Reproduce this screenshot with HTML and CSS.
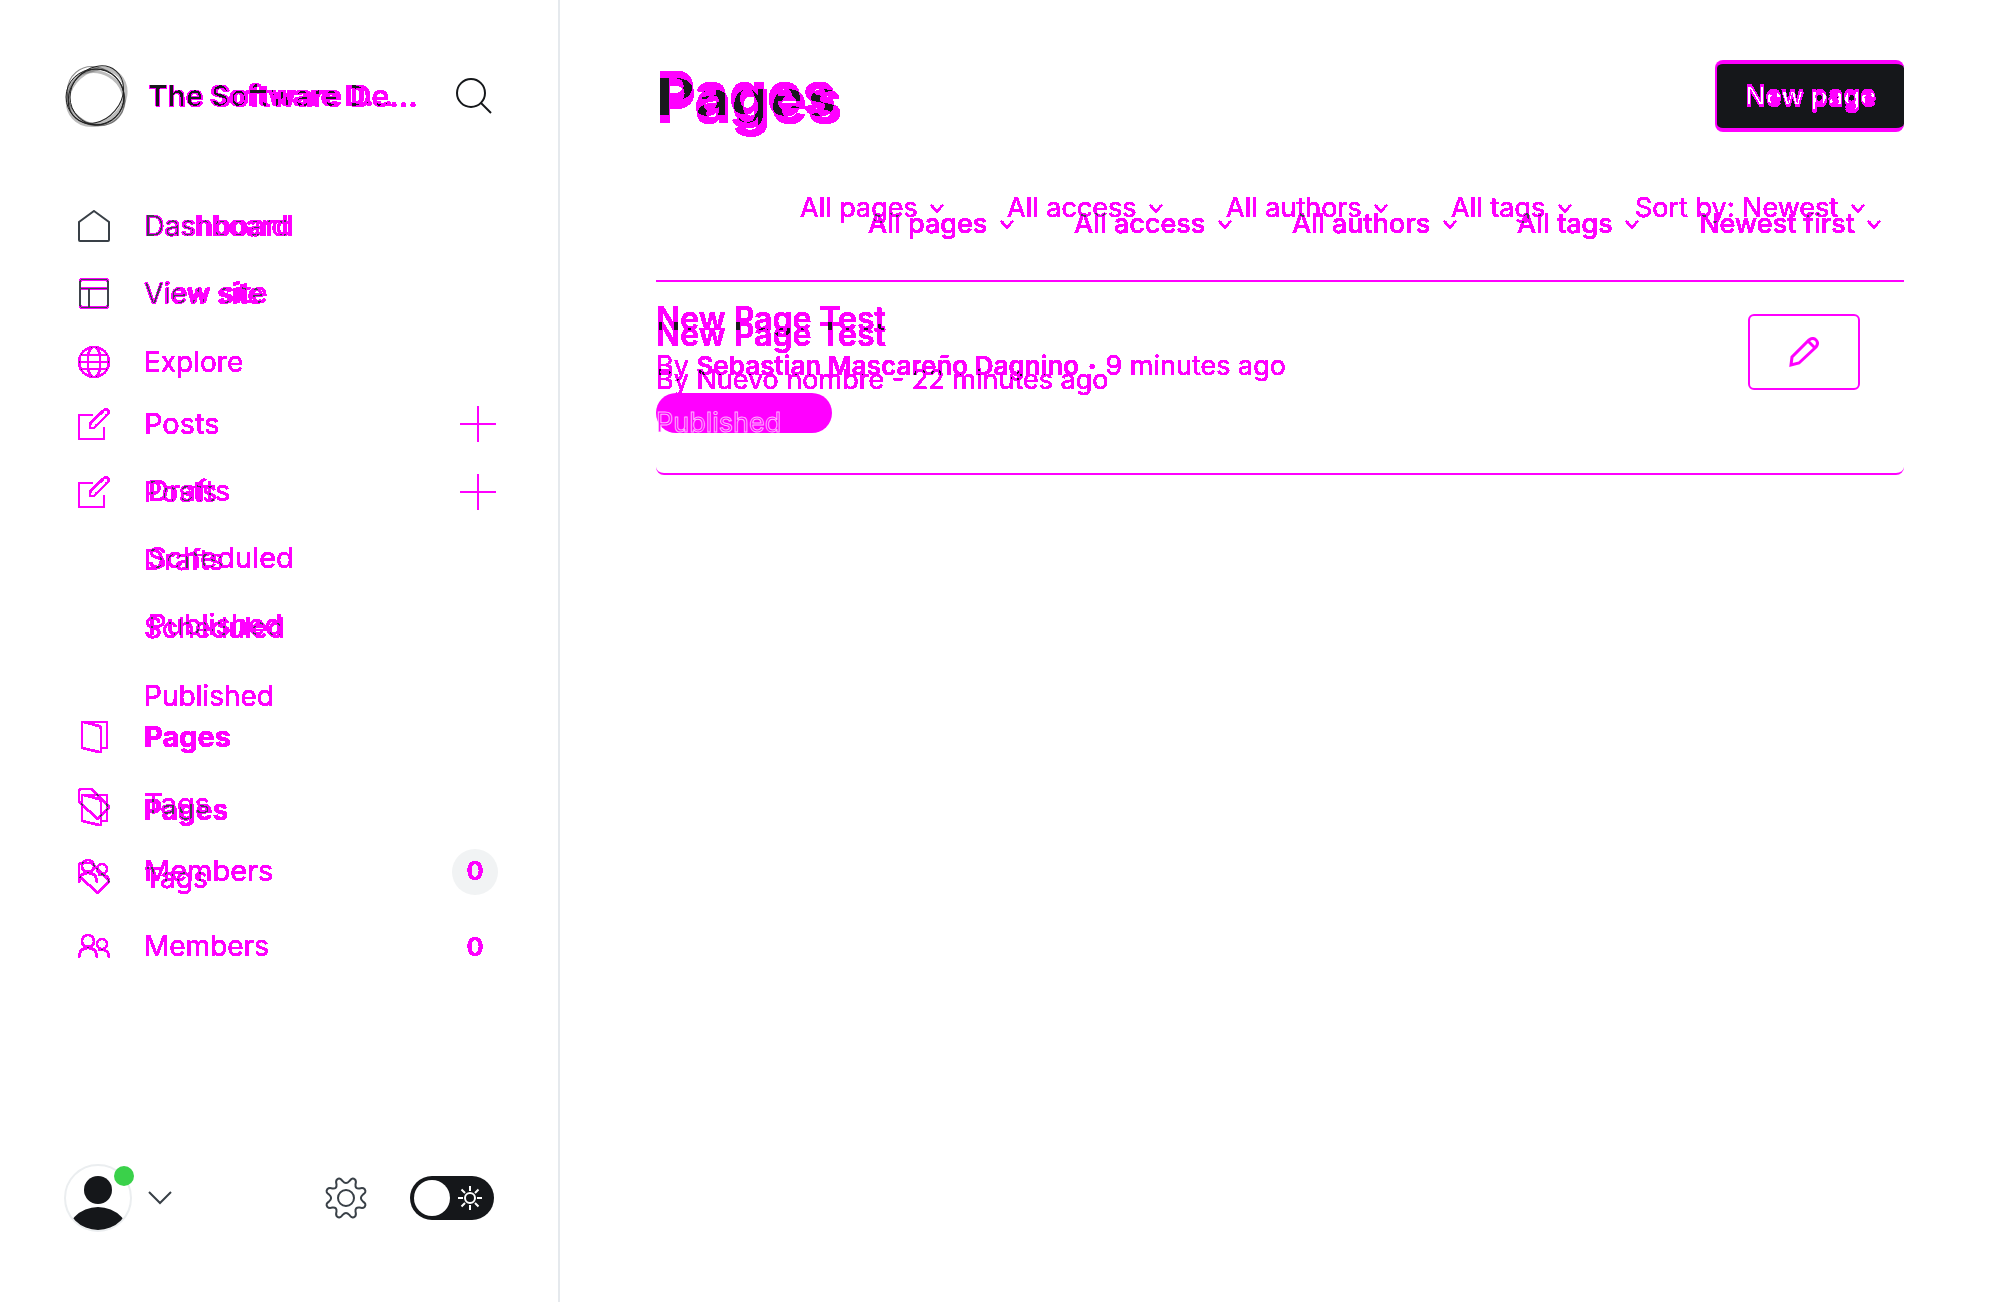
FILE: index.html
```
<!DOCTYPE html>
<html lang="en">
<head>
<meta charset="utf-8">
<meta name="viewport" content="width=device-width, initial-scale=1">
<title>Pages</title>
<link rel="stylesheet" href="styles.css">
</head>
<body>
<svg class="defs" aria-hidden="true">
  <!-- Two half-transparent layers: a single layer turns magenta, a full overlap turns to ink. -->
  <filter id="diff-ink" x="0" y="0" width="100%" height="100%" color-interpolation-filters="sRGB">
    <feColorMatrix values="0 0 0 1 0  0 0 0 1 0  0 0 0 1 0  0 0 0 1 0"/>
    <feComponentTransfer>
      <feFuncR type="discrete" tableValues="1 1 1 1 1 1 1 1 1 1 1 1 1 1 .1 .1 .1 .1 .1 .1"/>
      <feFuncG type="discrete" tableValues="0 0 0 0 0 0 0 0 0 0 0 0 0 0 .1 .1 .1 .1 .1 .1"/>
      <feFuncB type="discrete" tableValues="1 1 1 1 1 1 1 1 1 1 1 1 1 1 .11 .11 .11 .11 .11 .11"/>
      <feFuncA type="discrete" tableValues="0 1 1 1 1 1 1 1 1 1 1 1 1 1 1 1 1 1 1 1"/>
    </feComponentTransfer>
  </filter>
  <filter id="diff-slate" x="0" y="0" width="100%" height="100%" color-interpolation-filters="sRGB">
    <feColorMatrix values="0 0 0 1 0  0 0 0 1 0  0 0 0 1 0  0 0 0 1 0"/>
    <feComponentTransfer>
      <feFuncR type="discrete" tableValues="1 1 1 1 1 1 1 1 1 1 1 1 1 1 .25 .25 .25 .25 .25 .25"/>
      <feFuncG type="discrete" tableValues="0 0 0 0 0 0 0 0 0 0 0 0 0 0 .27 .27 .27 .27 .27 .27"/>
      <feFuncB type="discrete" tableValues="1 1 1 1 1 1 1 1 1 1 1 1 1 1 .3 .3 .3 .3 .3 .3"/>
      <feFuncA type="discrete" tableValues="0 1 1 1 1 1 1 1 1 1 1 1 1 1 1 1 1 1 1 1"/>
    </feComponentTransfer>
  </filter>
  <filter id="diff-white" x="0" y="0" width="100%" height="100%" color-interpolation-filters="sRGB">
    <feColorMatrix values="0 0 0 1 0  0 0 0 1 0  0 0 0 1 0  0 0 0 1 0"/>
    <feComponentTransfer>
      <feFuncR type="discrete" tableValues="1"/>
      <feFuncG type="discrete" tableValues="0 0 0 0 0 0 0 0 0 0 0 0 0 0 1 1 1 1 1 1"/>
      <feFuncB type="discrete" tableValues="1"/>
      <feFuncA type="discrete" tableValues="0 1 1 1 1 1 1 1 1 1 1 1 1 1 1 1 1 1 1 1"/>
    </feComponentTransfer>
  </filter>
  <symbol id="i-site" viewBox="0 0 32 32"><rect x="2" y="2" width="28" height="28" rx="2"/><path d="M2 11h28M11 11v19"/></symbol>
  <symbol id="i-globe" viewBox="0 0 32 32"><circle cx="16" cy="16" r="15"/><path d="M1 16h30M3 9h26M3 23h26M10 9v14M22 9v14M10 9q1-5 4-8M22 9q-1-5-4-8M10 23q1 5 4 8M22 23q-1 5-4 8"/></symbol>
  <symbol id="i-write" viewBox="0 0 32 32"><path d="M15 7H2q-1 0-1 1v22q0 1 1 1h23q1 0 1-1V19"/><path d="M12 20v-4L26 2q2-2 4 0t0 4L16 20z"/></symbol>
  <symbol id="i-pages" viewBox="0 0 32 32"><path d="M23 27h5q1 0 1-1V2q0-1-1-1H4v26l17 4q2 0 2-1V8q0-2-2-3L6 1"/></symbol>
  <symbol id="i-tag" viewBox="0 0 32 32"><path d="M1 13V3q0-2 2-2h10q1 0 2 1l16 17-11 12L2 15q-1-1-1-2z"/></symbol>
  <symbol id="i-members" viewBox="0 0 32 32"><circle cx="10" cy="11" r="6"/><circle cx="24" cy="14" r="5"/><path d="M1 28q0-10 9-10t9 10M20 20q11-2 11 8"/></symbol>
  <symbol id="i-plus" viewBox="0 0 36 36"><path d="M18 0v36M0 18h36"/></symbol>
  <symbol id="i-down" viewBox="0 0 14 10"><path d="M1 2l6 6 6-6"/></symbol>
</svg>

<div class="app">
  <aside class="sidebar">
    <header class="brand">
      <svg class="logo" viewBox="0 0 64 64" aria-hidden="true">
        <g fill="none" stroke="#222">
          <ellipse cx="31" cy="33" rx="29" ry="28" stroke-width="1"/>
          <ellipse cx="33" cy="33" rx="27" ry="28" stroke-width="1"/>
          <ellipse cx="32" cy="33" rx="31" ry="26" stroke-width="4" opacity=".3" transform="rotate(-42 32 32)"/>
          <ellipse cx="33" cy="31" rx="31" ry="25" stroke-width="1" transform="rotate(-50 32 32)"/>
          <ellipse cx="32" cy="32" rx="31" ry="27" stroke-width="1" opacity=".5" transform="rotate(50 32 32)"/>
          <ellipse cx="33" cy="34" rx="29" ry="26" stroke-width="3" opacity=".3" transform="rotate(30 32 32)"/>
        </g>
      </svg>
      <div class="stack diff-ink grow brand-name">
        <span class="half brand-short">The Software D...</span>
        <span class="half brand-long" aria-hidden="true">The Software De...</span>
      </div>
      <button class="plain" aria-label="Search">
        <svg class="search" viewBox="0 0 38 38"><circle cx="16" cy="16" r="14"/><path d="M26 26l10 10"/></svg>
      </button>
    </header>

    <nav class="stack">
      <div class="shared">
        <svg class="icon home" viewBox="0 0 32 32" aria-hidden="true"><path d="M16 1l15 11v18q0 1-1 1H2q-1 0-1-1V12z"/></svg>
        <span class="bubble"></span>
      </div>
      <div class="stack diff-slate">
        <ul class="menu menu-new half">
          <li><a href="#"><span class="icon"></span>Dashboard</a></li>
          <li><a href="#"><svg class="icon"><use href="#i-site"/></svg>View site</a></li>
          <li><a href="#"><svg class="icon"><use href="#i-globe"/></svg>Explore</a></li>
          <li class="posts"><a href="#"><svg class="icon"><use href="#i-write"/></svg>Posts</a><button class="plain add" aria-label="New post"><svg class="plus"><use href="#i-plus"/></svg></button></li>
          <li class="sub"><a href="#">Drafts</a></li>
          <li class="sub"><a href="#">Scheduled</a></li>
          <li class="sub"><a href="#">Published</a></li>
          <li class="pages"><a href="#"><svg class="icon"><use href="#i-pages"/></svg>Pages</a></li>
          <li><a href="#"><svg class="icon"><use href="#i-tag"/></svg>Tags</a></li>
          <li><a href="#"><svg class="icon"><use href="#i-members"/></svg>Members</a><span class="count">0</span></li>
        </ul>
        <ul class="menu menu-old half">
          <li><a href="#"><span class="icon"></span>Dashboard</a></li>
          <li><a href="#"><svg class="icon"><use href="#i-site"/></svg>View site</a></li>
          <li class="posts"><a href="#"><svg class="icon"><use href="#i-write"/></svg>Posts</a><button class="plain add" aria-label="New post"><svg class="plus"><use href="#i-plus"/></svg></button></li>
          <li class="sub"><a href="#">Drafts</a></li>
          <li class="sub"><a href="#">Scheduled</a></li>
          <li class="sub"><a href="#">Published</a></li>
          <li class="pages"><a href="#"><svg class="icon"><use href="#i-pages"/></svg>Pages</a></li>
          <li><a href="#"><svg class="icon"><use href="#i-tag"/></svg>Tags</a></li>
          <li><a href="#"><svg class="icon"><use href="#i-members"/></svg>Members</a><span class="count">0</span></li>
        </ul>
      </div>
    </nav>

    <footer class="account">
      <button class="plain user" aria-label="Account">
        <span class="avatar">
          <svg viewBox="0 0 68 68"><defs><clipPath id="face"><circle cx="34" cy="34" r="32"/></clipPath></defs><circle cx="34" cy="34" r="33" fill="#fff" stroke="#ebeef0" stroke-width="2"/><circle cx="34" cy="26" r="14" fill="#15171a"/><circle cx="34" cy="76" r="33" fill="#15171a" clip-path="url(#face)"/></svg>
          <span class="online"></span>
        </span>
        <svg class="caret" viewBox="0 0 24 14"><path d="M1 1l11 11L23 1"/></svg>
      </button>
      <a class="gear" href="#" aria-label="Settings">
        <svg viewBox="0 0 42 42"><circle cx="21" cy="21" r="8"/><path d="M17.700 4.200 Q21 8 24.300 4.200 Q27 0 30 2.500 Q31.500 4 30.500 7.500 Q30 12 34.500 11.500 Q38 10.500 39.500 12 Q42 15 37.800 17.700 Q34 21 37.800 24.300 Q42 27 39.500 30 Q38 31.500 34.500 30.500 Q30 30 30.500 34.500 Q31.500 38 30 39.500 Q27 42 24.300 37.800 Q21 34 17.700 37.800 Q15 42 12 39.500 Q10.500 38 11.500 34.500 Q12 30 7.500 30.500 Q4 31.500 2.500 30 Q0 27 4.200 24.300 Q8 21 4.200 17.700 Q0 15 2.500 12 Q4 10.500 7.500 11.500 Q12 12 11.500 7.500 Q10.500 4 12 2.500 Q15 0 17.700 4.200Z"/></svg>
      </a>
      <label class="theme">
        <input type="checkbox" aria-label="Dark mode">
        <svg viewBox="0 0 24 24" aria-hidden="true"><circle cx="12" cy="12" r="5"/><path d="M12 0v5M12 19v5M0 12h5M19 12h5M3.500 3.500l3.500 3.500M17 17l3.500 3.500M3.500 20.500L7 17M17 7l3.500-3.500"/></svg>
      </label>
    </footer>
  </aside>

  <main class="content">
    <header class="top">
      <h1 class="stack diff-ink title">
        <span class="half title-up">Pages</span>
        <span class="half title-low" aria-hidden="true">Pages</span>
      </h1>
      <button class="new-page"><span class="stack diff-white"><span class="half label-up">New page</span><span class="half label-low" aria-hidden="true">New page</span></span></button>
    </header>

    <div class="stack diff-slate filters">
      <form class="filter-row row-up half">
        <label><select aria-label="Type"><option>All pages</option></select><svg class="down"><use href="#i-down"/></svg></label>
        <label><select aria-label="Access"><option>All access</option></select><svg class="down"><use href="#i-down"/></svg></label>
        <label><select aria-label="Author"><option>All authors</option></select><svg class="down"><use href="#i-down"/></svg></label>
        <label><select aria-label="Tag"><option>All tags</option></select><svg class="down"><use href="#i-down"/></svg></label>
        <label><select aria-label="Order"><option>Sort by: Newest</option></select><svg class="down"><use href="#i-down"/></svg></label>
      </form>
      <form class="filter-row row-low half">
        <label><select aria-label="Type"><option>All pages</option></select><svg class="down"><use href="#i-down"/></svg></label>
        <label><select aria-label="Access"><option>All access</option></select><svg class="down"><use href="#i-down"/></svg></label>
        <label><select aria-label="Author"><option>All authors</option></select><svg class="down"><use href="#i-down"/></svg></label>
        <label><select aria-label="Tag"><option>All tags</option></select><svg class="down"><use href="#i-down"/></svg></label>
        <label><select aria-label="Order"><option>Newest first</option></select><svg class="down"><use href="#i-down"/></svg></label>
      </form>
    </div>

    <section class="list">
      <div class="stack grow">
        <div class="pill-layer"><span class="pill"></span></div>
        <div class="stack diff-ink">
          <article class="entry entry-up half">
            <h2>New Page Test</h2>
            <p>By <strong>Sebastian Mascareño Dagnino</strong> <strong class="dot">·</strong> 9 minutes ago</p>
          </article>
          <article class="entry entry-low half">
            <h2>New Page Test</h2>
            <p>By Nuevo nombre - 22 minutes ago</p>
          </article>
        </div>
        <p class="status">Published</p>
      </div>
      <button class="edit" aria-label="Edit page">
        <svg viewBox="0 0 30 30"><path d="M2 28l1-8L20 3q4-3 7 0t0 7L10 26z M19 4l7 7"/></svg>
      </button>
    </section>
  </main>
</div>
</body>
</html>
```
FILE: styles.css
```
* { box-sizing: border-box; }
body { margin: 0; background: #fff; font-family: Inter, "Liberation Sans", sans-serif; color: #15171a; }
h1, h2, p, ul { margin: 0; padding: 0; }
ul { list-style: none; }
a { color: inherit; text-decoration: none; }
svg { display: block; fill: none; stroke: currentColor; stroke-width: 2; flex: none; }
.defs { position: absolute; width: 0; height: 0; }
.plain { display: flex; border: 0; padding: 0; background: none; color: inherit; font: inherit; }
.grow { flex: 1; min-width: 0; }

/* Layers that share one cell */
.stack { display: grid; }
.stack > * { grid-area: 1 / 1; }
.half { color: rgb(255 0 255 / 50%); }
.diff-ink { filter: url(#diff-ink); }
.diff-slate { filter: url(#diff-slate); }
.diff-white { filter: url(#diff-white); }

.app { display: flex; min-height: 100vh; }
.sidebar { width: 28%; display: flex; flex-direction: column; border-right: 2px solid #e5e9ed; }

.brand { display: flex; align-items: center; height: 192px; padding: 0 65px 0 64px; }
.logo { width: 64px; height: 64px; }
.brand-name { margin: 0 24px 0 20px; line-height: 42px; white-space: nowrap; }
.brand-short { font-size: 29px; font-weight: 700; }
.brand-long { font-size: 30px; font-weight: 600; }
.search { width: 38px; height: 38px; }

.shared { display: flex; flex-direction: column; padding: 18px 60px 0 78px; }
.home { color: #394047; }
.bubble { align-self: flex-end; width: 46px; height: 46px; margin-top: 607px; border-radius: 50%; background: #f1f3f4; }
.menu { font-size: 28px; }
.menu li { display: flex; align-items: center; padding: 0 62px 0 78px; }
.menu a { display: flex; align-items: center; gap: 34px; flex: 1; }
.icon { width: 32px; height: 32px; }
.plus { width: 36px; height: 36px; }
.menu .sub { padding-left: 144px; }
.menu .pages { font-weight: 700; }
.count { width: 42px; text-align: center; font-size: 26px; font-weight: 600; }
.menu-new li { height: 68px; }
.menu-new .posts { margin-top: 62px; }
.menu-new .pages { margin-top: 46px; }
.menu-old { font-size: 29px; }
.menu-old li { height: 67px; }
.menu-old .posts { margin-top: 64px; }
.menu-old .pages { margin-top: 45px; }
.menu-old .sub { padding-left: 148px; }

.account { display: flex; align-items: center; margin-top: auto; padding: 0 64px 70px; color: #394047; }
.user { align-items: center; gap: 16px; margin-right: auto; }
.avatar { position: relative; width: 68px; height: 68px; }
.online { position: absolute; top: 2px; right: -2px; width: 20px; height: 20px; border-radius: 50%; background: #3ad14a; }
.avatar svg { stroke: none; }
.caret { width: 24px; height: 14px; }
.gear svg { width: 42px; height: 42px; }
.theme { position: relative; margin-left: 43px; }
.theme input { appearance: none; display: block; width: 84px; height: 44px; margin: 0; padding: 4px; border-radius: 22px; background: #15171a; }
.theme input::before { content: ""; display: block; width: 36px; height: 36px; border-radius: 50%; background: #fff; }
.theme svg { position: absolute; top: 10px; right: 12px; width: 24px; height: 24px; color: #fff; }

.content { flex: 1; min-width: 0; padding: 60px 96px; }
.top { display: flex; justify-content: space-between; align-items: flex-start; height: 120px; }
.title { font-weight: 700; line-height: 66px; height: 84px; }
.title-up { font-size: 60px; }
.title-low { font-size: 62px; padding-top: 8px; }
.new-page { display: flex; align-items: center; justify-content: center; width: 189px; height: 72px; border: solid #f0f; border-width: 4px 0 4px 2px; border-radius: 8px; background: #15171a; font: 600 28px/38px Inter, sans-serif; }
.label-up { font-size: 27px; }
.label-low { font-size: 27px; padding: 3px 0 0 1px; }

.filters { height: 100px; }
.filter-row { display: flex; justify-content: flex-end; align-items: flex-start; }
.filter-row label { display: flex; align-items: center; gap: 12px; }
.filter-row select { appearance: none; border: 0; padding: 0; margin: 0; background: none; color: inherit; font: 400 27px/32px Inter, sans-serif; }
.filter-row.row-low select { font-weight: 500; }
.down { width: 14px; height: 10px; }
.row-up { gap: 63px; padding: 12px 39px 0 0; }
.row-low { gap: 60px; padding: 28px 23px 0 0; }

.list { display: flex; align-items: flex-start; height: 195px; padding-right: 44px; border: solid #f0f; border-width: 2px 0; border-radius: 0 0 8px 8px; }
.entry h2 { font-size: 32px; font-weight: 600; line-height: 40px; }
.entry p { font-size: 27px; line-height: 32px; }
.entry strong { font-size: 26px; font-weight: 600; }
.entry .dot { padding: 0 1px; font-weight: 800; }
.entry-up { padding-top: 17px; }
.entry-up p { margin-top: 11px; }
.entry-low { padding-top: 33px; }
.entry-low p { margin-top: 9px; }
.pill-layer { padding-top: 111px; }
.pill { display: block; width: 176px; height: 40px; border-radius: 20px; background: #f0f; }
.status { padding-top: 125px; font-size: 27px; line-height: 32px; color: #f0f; -webkit-text-stroke: 1px rgb(255 255 255 / 70%); }
.edit { display: flex; align-items: center; justify-content: center; width: 112px; height: 76px; margin-top: 32px; padding: 0; border: 2px solid #f0f; border-radius: 6px; background: none; color: #f0f; }
.edit svg { width: 30px; height: 30px; stroke-width: 3; }
```
